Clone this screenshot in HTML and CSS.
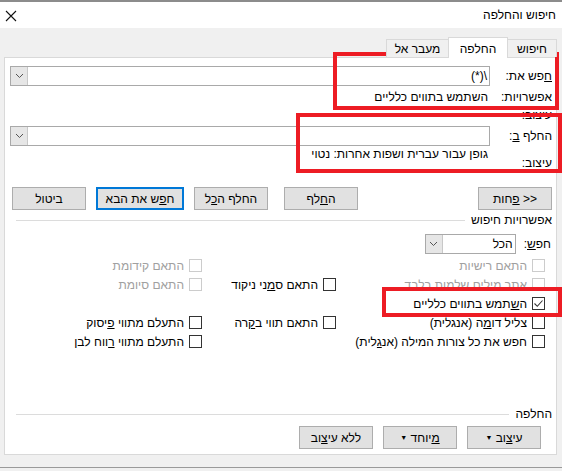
FILE: index.html
```html
<!DOCTYPE html>
<html lang="he" dir="rtl">
<head>
<meta charset="utf-8">
<link rel="stylesheet" href="styles.css">
</head>
<body>
<div class="win">
  <div class="titlebar">
    <span class="title">חיפוש והחלפה</span>
    <svg class="close" width="12" height="12" viewBox="0 0 12 12"><path d="M1 1L11 11M11 1L1 11" stroke="#111" stroke-width="1.1" fill="none"/></svg>
  </div>
  <div class="client">
    <div class="tabs">
      <div class="tab t1">חיפוש</div>
      <div class="tab sel">החלפה</div>
      <div class="tab t3">מעבר אל</div>
    </div>
    <div class="panel">
      <div class="field-row find-row">
        <span class="lbl"><u>ח</u>פש את:</span>
        <div class="combo"><span class="val">\(*)</span><span class="dd"><svg width="9" height="6" viewBox="0 0 9 6"><path d="M1 1L4.5 4.5L8 1" stroke="#555" fill="none"/></svg></span></div>
      </div>
      <div class="info-row opt-row">
        <span class="lbl">אפשרויות:</span>
        <span class="info">השתמש בתווים כלליים</span>
      </div>
      <div class="info-row ffmt-row">
        <span class="lbl">עיצוב:</span>
        <span class="info"></span>
      </div>
      <div class="field-row repl-row">
        <span class="lbl">החלף <u>ב</u>:</span>
        <div class="combo"><span class="val"></span><span class="dd"><svg width="9" height="6" viewBox="0 0 9 6"><path d="M1 1L4.5 4.5L8 1" stroke="#555" fill="none"/></svg></span></div>
      </div>
      <div class="info-row rfmt-row">
        <span class="lbl lbl-low">עיצוב:</span>
        <span class="info info-high">גופן עבור עברית ושפות אחרות: נטוי</span>
      </div>
      <div class="btn-row">
        <button class="btn">&lt;&lt; <u>פ</u>חות</button>
        <div class="btn-group">
          <button class="btn">ה<u>ח</u>לף</button>
          <button class="btn">החלף ה<u>כ</u>ל</button>
          <button class="btn def">ח<u>פ</u>ש את הבא</button>
          <button class="btn">ביטול</button>
        </div>
      </div>
      <div class="section-head sh1"><span>אפשרויות חיפוש</span><i></i></div>
      <div class="search-row">
        <span class="lbl2">חפ<u>ש</u>:</span>
        <div class="combo small"><span class="val">הכל</span><span class="dd"><svg width="9" height="6" viewBox="0 0 9 6"><path d="M1 1L4.5 4.5L8 1" stroke="#555" fill="none"/></svg></span></div>
      </div>
      <div class="checks">
        <div class="ck dis"><span class="box"></span><span>התאם רישיות</span></div>
        <div class="ck empty"></div>
        <div class="ck dis"><span class="box"></span><span>התאם קידומת</span></div>

        <div class="ck dis"><span class="box"></span><span>אתר מילים שלמות בלבד</span></div>
        <div class="ck"><span class="box"></span><span>התאם ס<u>מ</u>ני ניקוד</span></div>
        <div class="ck dis"><span class="box"></span><span>התאם סיומת</span></div>

        <div class="ck"><span class="box on"><svg width="11" height="11" viewBox="0 0 11 11"><path d="M1.5 5.5L4.3 8.3L9.5 2.5" stroke="#333" stroke-width="1.1" fill="none"/></svg></span><span>ה<u>ש</u>תמש בתווים כלליים</span></div>
        <div class="ck empty"></div>
        <div class="ck empty"></div>

        <div class="ck"><span class="box"></span><span>צליל דו<u>מ</u>ה (אנגלית)</span></div>
        <div class="ck"><span class="box"></span><span>התאם תווי ב<u>ק</u>רה</span></div>
        <div class="ck"><span class="box"></span><span>התעלם מתווי <u>פ</u>יסוק</span></div>

        <div class="ck"><span class="box"></span><span>חפש את כל צורות המילה (אנ<u>ג</u>לית)</span></div>
        <div class="ck empty"></div>
        <div class="ck"><span class="box"></span><span>התעלם מתווי <u>ר</u>ווח לבן</span></div>
      </div>
      <div class="section-head sh2"><span>החלפה</span><i></i></div>
      <div class="btn-row2">
        <button class="btn">עי<u>צ</u>וב <span class="tri">▼</span></button>
        <button class="btn"><u>מ</u>יוחד <span class="tri">▼</span></button>
        <button class="btn">ללא עי<u>צ</u>וב</button>
      </div>
    </div>
  </div>
</div>
<div class="mark m1"></div>
<div class="mark m2"></div>
<div class="mark m3"></div>
</body>
</html>
```
FILE: styles.css
```css
html, body {
  margin: 0;
  padding: 0;
}
body {
  width: 562px;
  height: 471px;
  overflow: hidden;
  background: #f0f0f0;
  font-family: "Liberation Sans", "DejaVu Sans", sans-serif;
  font-size: 12px;
  color: #000;
  position: relative;
}
u { text-decoration: underline; text-underline-offset: 1px; }
.win {
  width: 562px;
  height: 471px;
  border-top: 2px solid #8c8c8c;
  box-sizing: border-box;
  display: flex;
  flex-direction: column;
}
.titlebar {
  height: 26px;
  background: #fff;
  display: flex;
  align-items: center;
  justify-content: space-between;
  padding: 0 6px 0 5px;
  flex: none;
}
.title { font-size: 12px; }
.close { margin-top: 1px; }
.client {
  flex: 1;
  background: #f0f0f0;
  padding: 0 5px 0 4px;
  display: flex;
  flex-direction: column;
  border-bottom: 1px solid #9a9a9a;
  margin-bottom: 3px;
}
.tabs {
  height: 29px;
  display: flex;
  align-items: flex-end;
  flex: none;
  position: relative;
  z-index: 2;
}
.tab {
  height: 17px;
  line-height: 18px;
  border: 1px solid #d9d9d9;
  border-bottom: none;
  background: #f0f0f0;
  margin-left: -1px;
  text-align: center;
  box-sizing: content-box;
}
.t1 { width: 48px; }
.t3 { width: 61px; }
.tab.sel {
  width: 58px;
  height: 20px;
  line-height: 22px;
  background: #fff;
  margin-bottom: -1px;
  position: relative;
}
.panel {
  background: #fff;
  border: 1px solid #d9d9d9;
  height: 398px;
  box-sizing: border-box;
  padding: 0 4px 0 5px;
  display: flex;
  flex-direction: column;
}
.field-row {
  display: grid;
  grid-template-columns: 62px 1fr;
  align-items: center;
  height: 20px;
}
.find-row { margin-top: 8px; }
.repl-row { margin-top: 4px; }
.combo {
  height: 20px;
  box-sizing: border-box;
  border: 1px solid #a9a9a9;
  display: flex;
  align-items: center;
  justify-content: space-between;
  background: #fff;
}
.combo .val { padding-right: 2px; }
.dd {
  width: 16px;
  height: 18px;
  background: #e6e6e6;
  border-right: 1px solid #c8c8c8;
  display: flex;
  align-items: center;
  justify-content: center;
}
.info-row {
  display: grid;
  grid-template-columns: 62px 1fr;
  align-items: center;
  height: 17px;
}
.opt-row { margin-top: 2px; }
.ffmt-row .lbl { margin-top: 2px; }
.info { padding-right: 2px; }
.rfmt-row { height: 30px; align-items: start; }
.lbl-low { margin-top: 10px; }
.info-high { margin-top: 1px; }
.btn-row {
  margin-top: 11px;
  display: flex;
  justify-content: space-between;
  padding: 0 0 0 2px;
}
.btn-group { display: flex; gap: 10px; }
.btn-group .btn:nth-child(3) { width: 88px; }
.btn {
  width: 74px;
  height: 23px;
  box-sizing: border-box;
  background: #e1e1e1;
  border: 1px solid #adadad;
  font: inherit;
  color: #000;
  padding: 0;
  margin: 0;
}
.btn.def { border: 2px solid #0078d7; }
.btn-group .btn:first-child { margin-left: 6px; }
.section-head {
  display: flex;
  align-items: center;
  gap: 6px;
  height: 14px;
}
.section-head i {
  flex: 1;
  height: 1px;
  background: #dcdcdc;
  margin-left: 6px;
}
.sh1 { margin-top: 3px; }
.search-row {
  display: flex;
  align-items: center;
  gap: 8px;
  margin-top: 7px;
  height: 20px;
  padding-right: 1px;
}
.combo.small { width: 91px; }
.checks {
  margin-top: 2px;
  display: grid;
  grid-template-columns: 209px 134px 1fr;
  grid-auto-rows: 19px;
  padding-right: 7px;
}
.ck {
  display: flex;
  align-items: center;
  gap: 5px;
  white-space: nowrap;
}
.box {
  width: 13px;
  height: 13px;
  box-sizing: border-box;
  border: 1px solid #333;
  background: #fff;
  display: flex;
  align-items: center;
  justify-content: center;
  flex: none;
}
.ck.dis { color: #a0a0a0; }
.ck.dis .box { border-color: #cccccc; }
.sh2 { margin-top: 56px; }
.btn-row2 {
  margin-top: 5px;
  display: flex;
  gap: 10px;
  padding-right: 11px;
}
.tri { font-size: 7px; vertical-align: 2px; }
.mark {
  position: absolute;
  border: 4px solid #ed1c24;
  box-sizing: border-box;
}
.m1 { left: 333px; top: 52px; width: 226px; height: 58px; }
.m2 { left: 296px; top: 113px; width: 266px; height: 60px; }
.m3 { left: 382px; top: 287px; width: 180px; height: 30px; }
```
